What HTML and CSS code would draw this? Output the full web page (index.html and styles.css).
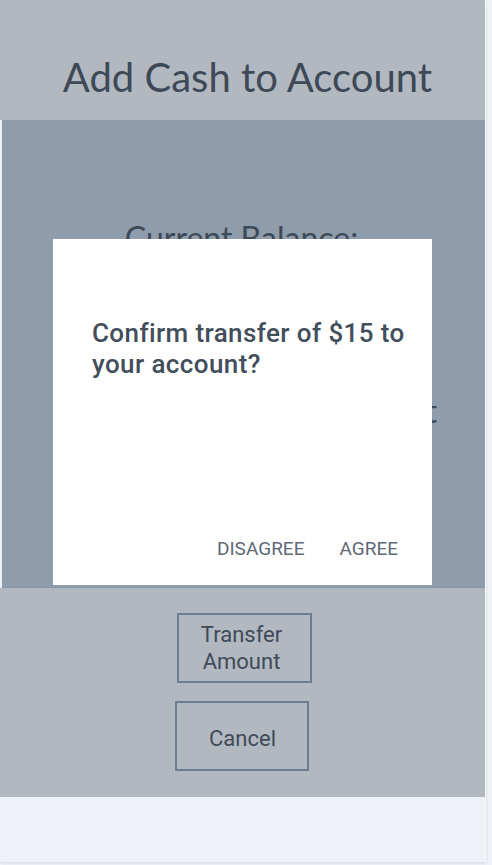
FILE: index.html
```html
<!DOCTYPE html>
<html lang="en">
<head>
<meta charset="utf-8">
<title>Add Cash to Account</title>
<link rel="stylesheet" href="styles.css">
</head>
<body>
<div class="page">
  <div class="card">
    <header class="header">
      <h1 class="title">Add Cash to Account</h1>
    </header>
    <section class="panel">
      <div class="balance-label">Current Balance:</div>
      <div class="amount-label">Transfer amount</div>
    </section>
    <section class="actions">
      <button class="outline-btn outline-btn--shift">Transfer<br>Amount</button>
      <button class="outline-btn outline-btn--single">Cancel</button>
    </section>
    <footer class="footer"></footer>

    <div class="dialog" role="dialog">
      <h2 class="dialog-title">Confirm transfer of $15 to your account?</h2>
      <div class="dialog-actions">
        <button class="text-btn">Disagree</button>
        <button class="text-btn">Agree</button>
      </div>
    </div>
  </div>
</div>
</body>
</html>
```

FILE: styles.css
```css
* { box-sizing: border-box; }

html, body {
  margin: 0;
  padding: 0;
  background: #eef1f5;
}

.page {
  width: 492px;
  height: 865px;
}

.card {
  position: relative;
  width: 486px;
  border-right: 1px solid #f7f9fb;
  border-bottom: 1px solid #dde1e6;
  box-shadow: 1px 1px 2px rgba(0, 0, 0, 0.06);
}

.header {
  height: 120px;
  background: #b2b8c0;
  padding-top: 54px;
  padding-left: 10px;
  text-align: center;
}

.title {
  margin: 0;
  font-family: Lato, "Liberation Sans", sans-serif;
  font-weight: 400;
  font-size: 40px;
  line-height: 46px;
  color: #3d4956;
}

.panel {
  height: 468px;
  margin-left: 2px;
  background: #8f9cac;
  border-bottom: 1px solid #8795a6;
  padding-top: 98px;
  display: flex;
  flex-direction: column;
  font-family: Lato, "Liberation Sans", sans-serif;
  color: #3d4956;
  font-size: 32px;
  line-height: normal;
}

.balance-label {
  text-align: center;
  padding-right: 4px;
}

.amount-label {
  text-align: right;
  padding-right: 48px;
  margin-top: 133px;
  font-size: 33px;
}

.actions {
  height: 209px;
  background: #b2b8c0;
  padding-top: 25px;
  display: flex;
  flex-direction: column;
  align-items: center;
  gap: 18px;
}

.outline-btn {
  width: 134px;
  height: 70px;
  margin: 0;
  padding: 0;
  background: transparent;
  border: 2px solid #6e7c8f;
  font-family: Roboto, "Liberation Sans", sans-serif;
  font-size: 22px;
  line-height: 27px;
  color: #3f4a58;
  text-align: center;
  cursor: pointer;
}

.outline-btn--shift {
  width: 135px;
  margin-left: 4px;
  padding-right: 6px;
}

.outline-btn--single {
  padding-top: 4px;
  padding-left: 2px;
  margin-right: 2px;
}

.footer {
  height: 65px;
  background: #eef1f5;
}

.dialog {
  position: absolute;
  left: 53px;
  top: 239px;
  width: 379px;
  height: 346px;
  background: #ffffff;
  display: flex;
  flex-direction: column;
  padding: 79px 10px 25px 39px;
}

.dialog-title {
  margin: 0;
  font-family: Roboto, "Liberation Sans", sans-serif;
  font-weight: 500;
  font-size: 26px;
  line-height: 31px;
  letter-spacing: 0.4px;
  color: #434e5c;
}

.dialog-actions {
  margin-top: auto;
  padding-right: 24px;
  display: flex;
  justify-content: flex-end;
  gap: 35px;
}

.text-btn {
  margin: 0;
  padding: 0;
  border: 0;
  background: transparent;
  font-family: Roboto, "Liberation Sans", sans-serif;
  font-weight: 400;
  font-size: 19px;
  line-height: 22px;
  text-transform: uppercase;
  color: #5f6876;
  cursor: pointer;
}
```
